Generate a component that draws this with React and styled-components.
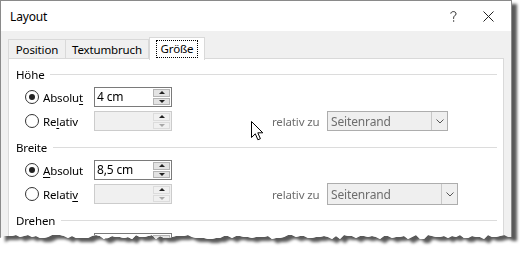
import React from "react";
import styled, { createGlobalStyle } from "styled-components";

const GlobalStyle = createGlobalStyle`
  html, body {
    margin: 0;
    padding: 0;
    background: #ffffff;
  }
  body {
    font-family: "Noto Sans", "Liberation Sans", sans-serif;
    font-size: 11.5px;
    letter-spacing: -0.15px;
    color: #000;
  }
`;

// jagged torn bottom edge
function tornPath(width, base) {
  let seed = 7;
  const rnd = () => {
    seed = (seed * 9301 + 49297) % 233280;
    return seed / 233280;
  };
  const pts = ["0px 0px", `${width}px 0px`];
  for (let x = width; x >= 0; x -= 4) {
    const y = base + Math.round(rnd() * 4 - 2);
    pts.push(`${x}px ${y}px`);
  }
  pts.push(`0px ${base}px`);
  return `polygon(${pts.join(",")})`;
}

const Frame = styled.div`
  width: 512px;
  filter: drop-shadow(5px 4px 1.5px rgba(0, 0, 0, 0.65));
`;

const Dialog = styled.div`
  position: relative;
  box-sizing: border-box;
  width: 512px;
  height: 246px;
  background: #f0f0f0;
  border: 1px solid #8a8a8a;
  border-bottom: none;
  clip-path: ${(p) => p.$clip};
`;

const TitleBar = styled.div`
  height: 30px;
  background: #ffffff;
  display: flex;
  align-items: center;
  padding-left: 9px;
`;

const Title = styled.div`
  flex: 1;
  font-size: 12px;
`;

const TitleButton = styled.div`
  width: ${(p) => p.$w}px;
  display: flex;
  justify-content: center;
  color: #111;
`;

const Body = styled.div`
  padding: 6px 8px 0 7px;
`;

const Tabs = styled.div`
  display: flex;
  align-items: flex-end;
  height: 22px;
  position: relative;
  z-index: 1;
`;

const Tab = styled.div`
  box-sizing: border-box;
  width: ${(p) => p.$w}px;
  height: ${(p) => (p.$active ? 23 : 20)}px;
  margin-bottom: ${(p) => (p.$active ? -1 : 0)}px;
  border: 1px solid #d9d9d9;
  border-bottom: ${(p) => (p.$active ? "none" : "1px solid #d9d9d9")};
  border-left: ${(p) => (p.$first || p.$active ? "1px solid #d9d9d9" : "none")};
  background: ${(p) => (p.$active ? "#ffffff" : "#f0f0f0")};
  display: flex;
  align-items: center;
  justify-content: center;
  padding-top: ${(p) => (p.$active ? 0 : 1)}px;
`;

const Focus = styled.span`
  outline: 1px dotted #000;
  outline-offset: 0;
  padding: 1px 4px;
  line-height: 14px;
`;

const Panel = styled.div`
  box-sizing: border-box;
  margin-top: -1px;
  width: 496px;
  height: 200px;
  background: #ffffff;
  border: 1px solid #d9d9d9;
  padding: 7px 6px 0 7px;
`;

const GroupHead = styled.div`
  display: flex;
  align-items: center;
  height: 16px;
  margin-top: ${(p) => (p.$first ? 0 : 8)}px;
  gap: 6px;
  &::after {
    content: "";
    flex: 1;
    height: 1px;
    background: #dcdcdc;
  }
`;

const Rows = styled.div`
  display: flex;
  flex-direction: column;
  gap: 4px;
  margin-top: 5px;
  padding-left: 9px;
`;

const Row = styled.div`
  display: flex;
  align-items: center;
  height: 20px;
`;

const Choice = styled.label`
  width: 69px;
  display: flex;
  align-items: center;
  gap: 4px;
`;

const Radio = styled.span`
  box-sizing: border-box;
  width: 14px;
  height: 14px;
  border-radius: 50%;
  border: 1px solid #333;
  background: #fff;
  display: flex;
  align-items: center;
  justify-content: center;
  &::after {
    content: "";
    width: 6px;
    height: 6px;
    border-radius: 50%;
    background: ${(p) => (p.$on ? "#222" : "transparent")};
  }
`;

const Key = styled.span`
  text-decoration: underline;
  text-underline-offset: 2px;
`;

const Spin = styled.div`
  box-sizing: border-box;
  width: 78px;
  height: 20px;
  display: flex;
  border: 1px solid ${(p) => (p.$off ? "#cccccc" : "#7a7a7a")};
  background: ${(p) => (p.$off ? "#f0f0f0" : "#ffffff")};
`;

const SpinText = styled.div`
  flex: 1;
  padding-left: 2px;
  font-size: 12px;
  line-height: 17px;
`;

const SpinButtons = styled.div`
  width: 17px;
  display: flex;
  flex-direction: column;
  padding: 1px 1px 1px 0;
  gap: 1px;
`;

const SpinBtn = styled.div`
  box-sizing: border-box;
  flex: 1;
  background: ${(p) => (p.$off ? "#f0f0f0" : "#e3e3e3")};
  border: 1px solid ${(p) => (p.$off ? "#dcdcdc" : "#b4b4b4")};
  display: flex;
  align-items: center;
  justify-content: center;
  &::after {
    content: "";
    border-left: 3px solid transparent;
    border-right: 3px solid transparent;
    ${(p) =>
      p.$down
        ? `border-top: 3px solid ${p.$dim ? "#a8a8a8" : "#222"};`
        : `border-bottom: 3px solid #222;`}
  }
`;

const RelLabel = styled.span`
  margin-left: 100px;
  width: 55px;
  color: #6d6d6d;
`;

const Select = styled.div`
  box-sizing: border-box;
  width: ${(p) => p.$w}px;
  height: ${(p) => p.$h}px;
  border: 1px solid #adadad;
  background: #efefef;
  display: flex;
  align-items: center;
  color: #6d6d6d;
  font-size: 12px;
`;

const SelectText = styled.span`
  flex: 1;
  padding-left: 3px;
`;

const SelectArrow = styled.span`
  width: 15px;
  align-self: stretch;
  border-left: 1px solid #c8c8c8;
  display: flex;
  align-items: center;
  justify-content: center;
`;

const Cursor = styled.svg`
  position: absolute;
  left: 250px;
  top: 120px;
`;

function Spinner({ value, off }) {
  return (
    <Spin $off={off}>
      <SpinText>{value}</SpinText>
      <SpinButtons>
        <SpinBtn $off={off} />
        <SpinBtn $off={off} $down $dim={off} />
      </SpinButtons>
    </Spin>
  );
}

function Dropdown({ w, h }) {
  return (
    <Select $w={w} $h={h}>
      <SelectText>Seitenrand</SelectText>
      <SelectArrow>
        <svg width="8" height="5" viewBox="0 0 8 5">
          <path d="M0.5 0.5 L4 4 L7.5 0.5" fill="none" stroke="#555" strokeWidth="1" />
        </svg>
      </SelectArrow>
    </Select>
  );
}

export default function App() {
  return (
    <>
      <GlobalStyle />
      <Frame>
        <Dialog $clip={tornPath(512, 237)}>
          <TitleBar>
            <Title>Layout</Title>
            <TitleButton $w={24}>
              <svg width="7" height="11" viewBox="0 0 7 11">
                <path d="M0.8 2.6 C1 1.2 2.1 0.6 3.4 0.6 C5 0.6 6 1.5 6 2.8 C6 4.6 3.6 4.8 3.6 6.8 L3.6 7.8" fill="none" stroke="#222" strokeWidth="1" />
                <rect x="3" y="9.4" width="1.2" height="1.2" fill="#222" />
              </svg>
            </TitleButton>
            <TitleButton $w={46}>
              <svg width="11" height="11" viewBox="0 0 11 11">
                <path d="M0.5 0.5 L10.5 10.5 M10.5 0.5 L0.5 10.5" stroke="#222" strokeWidth="1" />
              </svg>
            </TitleButton>
          </TitleBar>
          <Body>
            <Tabs>
              <Tab $w={58} $first>Position</Tab>
              <Tab $w={83}>Textumbruch</Tab>
              <Tab $w={56} $active><Focus>Größe</Focus></Tab>
            </Tabs>
            <Panel>
              <GroupHead $first>Höhe</GroupHead>
              <Rows>
                <Row>
                  <Choice><Radio $on /><span>Absolu<Key>t</Key></span></Choice>
                  <Spinner value="4 cm" />
                </Row>
                <Row>
                  <Choice><Radio /><span>Re<Key>l</Key>ativ</span></Choice>
                  <Spinner off />
                  <RelLabel>relativ zu</RelLabel>
                  <Dropdown w={121} h={20} />
                </Row>
              </Rows>
              <GroupHead>Breite</GroupHead>
              <Rows>
                <Row>
                  <Choice><Radio $on /><span><Key>A</Key>bsolut</span></Choice>
                  <Spinner value="8,5 cm" />
                </Row>
                <Row>
                  <Choice><Radio /><span>Relati<Key>v</Key></span></Choice>
                  <Spinner off />
                  <RelLabel>relativ zu</RelLabel>
                  <Dropdown w={131} h={22} />
                </Row>
              </Rows>
              <GroupHead>Drehen</GroupHead>
              <Rows>
                <Row>
                  <Choice />
                  <Spinner value="0°" />
                </Row>
              </Rows>
            </Panel>
          </Body>
          <Cursor width="14" height="21" viewBox="0 0 14 21">
            <path
              d="M0.5 0.5 L0.5 16.5 L4.3 12.8 L6.9 18.8 L9.4 17.7 L6.8 11.8 L11.8 11.8 Z"
              fill="#fff"
              stroke="#000"
              strokeWidth="1"
              strokeLinejoin="miter"
            />
          </Cursor>
        </Dialog>
      </Frame>
    </>
  );
}
